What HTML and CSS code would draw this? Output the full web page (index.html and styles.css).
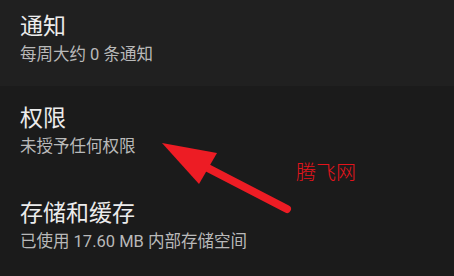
FILE: index.html
```html
<!DOCTYPE html>
<html lang="zh-CN">
<head>
<meta charset="utf-8">
<link rel="stylesheet" href="styles.css">
</head>
<body>
<div class="screen">
  <div class="row row-top">
    <div class="title">通知</div>
    <div class="sub">每周大约 0 条通知</div>
  </div>
  <div class="row">
    <div class="title">权限</div>
    <div class="sub">未授予任何权限</div>
  </div>
  <div class="row">
    <div class="title">存储和缓存</div>
    <div class="sub">已使用 17.60 MB 内部存储空间</div>
  </div>
  <svg class="arrow" width="454" height="276" viewBox="0 0 454 276">
    <line x1="287" y1="209" x2="200" y2="164" stroke="#ed1c24" stroke-width="8" stroke-linecap="round"/>
    <polygon points="162,143 217,153 199,184" fill="#ed1c24"/>
  </svg>
  <div class="mark">腾飞网</div>
</div>
</body>
</html>
```
FILE: styles.css
```css
html, body {
  margin: 0;
  padding: 0;
  background: #1b1b1b;
}
.screen {
  position: relative;
  width: 454px;
  height: 276px;
  overflow: hidden;
  background: #1b1b1b;
  font-family: Roboto, "Noto Sans CJK SC", sans-serif;
}
.row {
  height: 95px;
  box-sizing: border-box;
  padding: 18px 20px 0;
}
.row-top {
  height: 92px;
  margin-top: -6px;
  background: #202020;
}
.title {
  font-size: 23px;
  line-height: 30px;
  color: #ececec;
}
.sub {
  margin-top: 2px;
  font-size: 16.5px;
  line-height: 22px;
  color: #b9b9b9;
}
.arrow {
  position: absolute;
  left: 0;
  top: 0;
}
.mark {
  position: absolute;
  left: 296px;
  top: 158px;
  font-family: "Noto Sans CJK SC", sans-serif;
  font-weight: 300;
  font-size: 20px;
  line-height: 28px;
  color: #e4141c;
}
```
